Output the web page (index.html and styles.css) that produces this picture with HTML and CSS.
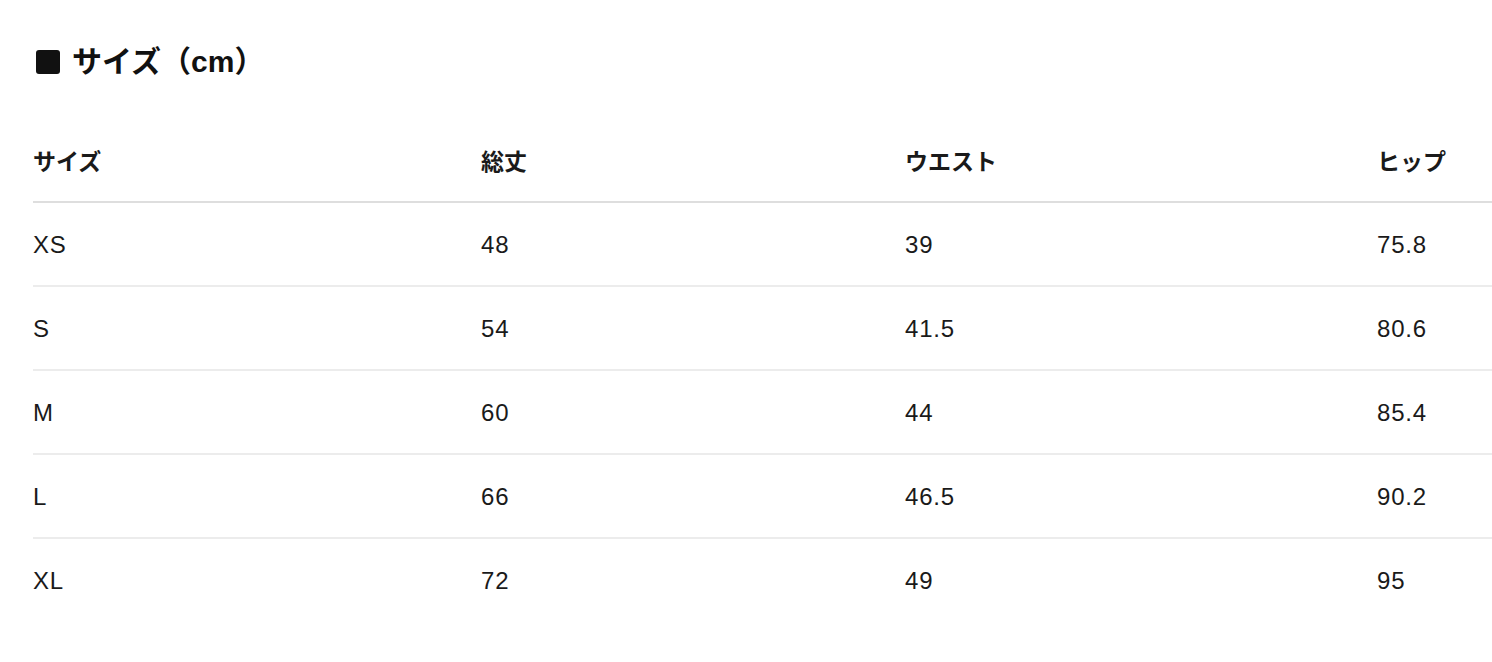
FILE: index.html
```html
<!DOCTYPE html>
<html lang="ja">
<head>
<meta charset="utf-8">
<title>サイズ（cm）</title>
<link rel="stylesheet" href="styles.css">
</head>
<body>
<section class="size-section">
  <h2 class="size-title"><span class="title-mark"></span>サイズ（cm）</h2>
  <table class="size-table">
    <colgroup>
      <col class="col-1">
      <col class="col-2">
      <col class="col-3">
      <col class="col-4">
    </colgroup>
    <thead>
      <tr><th>サイズ</th><th>総丈</th><th>ウエスト</th><th>ヒップ</th></tr>
    </thead>
    <tbody>
      <tr><td>XS</td><td>48</td><td>39</td><td>75.8</td></tr>
      <tr><td>S</td><td>54</td><td>41.5</td><td>80.6</td></tr>
      <tr><td>M</td><td>60</td><td>44</td><td>85.4</td></tr>
      <tr><td>L</td><td>66</td><td>46.5</td><td>90.2</td></tr>
      <tr><td>XL</td><td>72</td><td>49</td><td>95</td></tr>
    </tbody>
  </table>
</section>
</body>
</html>
```

FILE: styles.css
```css
html, body {
  margin: 0;
  padding: 0;
  background: #fff;
}

body {
  font-family: "Liberation Sans", "Noto Sans CJK JP", sans-serif;
  color: #111;
  overflow: hidden;
}

.size-section {
  padding: 42px 0 0 33px;
}

.size-title {
  display: flex;
  align-items: center;
  gap: 12px;
  margin: 0 0 38px 0;
  font-size: 30px;
  line-height: 40px;
  font-weight: 700;
  color: #111;
}

.title-mark {
  display: inline-block;
  width: 24px;
  height: 24px;
  margin-left: 3px;
  background: #111;
  border-radius: 3px;
}

.size-table {
  width: 1459px;
  border-collapse: collapse;
  table-layout: fixed;
  line-height: 30px;
}

.col-1 { width: 448px; }
.col-2 { width: 424px; }
.col-3 { width: 472px; }
.col-4 { width: 115px; }

.size-table th,
.size-table td {
  text-align: left;
  padding: 0;
  white-space: nowrap;
}

.size-table th {
  font-size: 23px;
  font-weight: 700;
  color: #1a1a1a;
  padding-top: 27px;
  padding-bottom: 24px;
  border-bottom: 2px solid #dedede;
}

.size-table td {
  font-size: 24px;
  letter-spacing: 0.8px;
  font-weight: 400;
  color: #1a1a1a;
  padding-top: 27px;
  padding-bottom: 25px;
  border-bottom: 2px solid #ececec;
}

.size-table tbody tr:last-child td {
  border-bottom: none;
}
```
